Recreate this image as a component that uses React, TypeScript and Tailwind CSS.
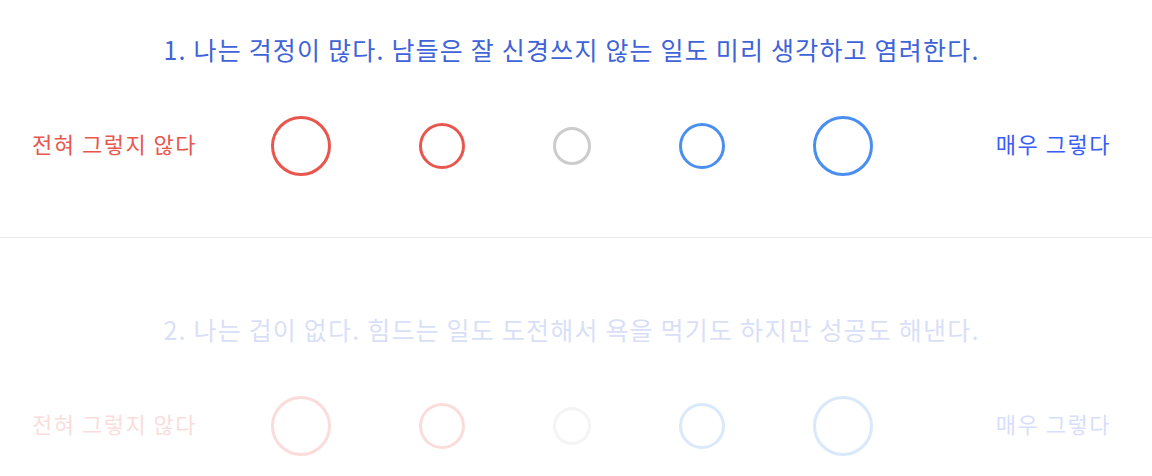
import React from 'react'

type Question = {
  id: number
  text: string
}

const questions: Question[] = [
  { id: 1, text: '1. 나는 걱정이 많다. 남들은 잘 신경쓰지 않는 일도 미리 생각하고 염려한다.' },
  { id: 2, text: '2. 나는 겁이 없다. 힘드는 일도 도전해서 욕을 먹기도 하지만 성공도 해낸다.' },
]

const font = { fontFamily: '"Noto Sans CJK KR", "Noto Sans", sans-serif' }

const Scale: React.FC = () => (
  <div className="flex items-center gap-[88px]">
    <button className="w-[60px] h-[60px] rounded-full border-[3px] border-[#e8574e] bg-white" />
    <button className="w-[46px] h-[46px] rounded-full border-[3px] border-[#e8574e] bg-white" />
    <button className="w-[38px] h-[38px] rounded-full border-[3px] border-[#cccccc] bg-white" />
    <button className="w-[46px] h-[46px] rounded-full border-[3px] border-[#4a8ff0] bg-white" />
    <button className="w-[60px] h-[60px] rounded-full border-[3px] border-[#4a8ff0] bg-white" />
  </div>
)

export default function App() {
  return (
    <div className="h-screen bg-white overflow-hidden" style={font}>
      {questions.map((q, i) => (
        <section
          key={q.id}
          className={
            i === 0
              ? 'pt-[33px] pb-[61px] border-b border-[#ebebeb]'
              : 'pt-[75px] pb-[60px] opacity-20'
          }
        >
          <h2 className="text-center text-[25px] leading-[32px] font-normal text-[#4063d8] pr-[9px] tracking-[1.2px]">
            {q.text}
          </h2>
          <div className="flex items-center pl-8 pr-[41px] mt-[51px]">
            <span className="w-[239px] pb-[5px] text-[22px] font-normal tracking-[1.5px] text-[#e8574e]">전혀 그렇지 않다</span>
            <Scale />
            <span className="flex-1 pb-[5px] text-right text-[22px] font-normal tracking-[1.5px] text-[#3a5cf8]">매우 그렇다</span>
          </div>
        </section>
      ))}
    </div>
  )
}
